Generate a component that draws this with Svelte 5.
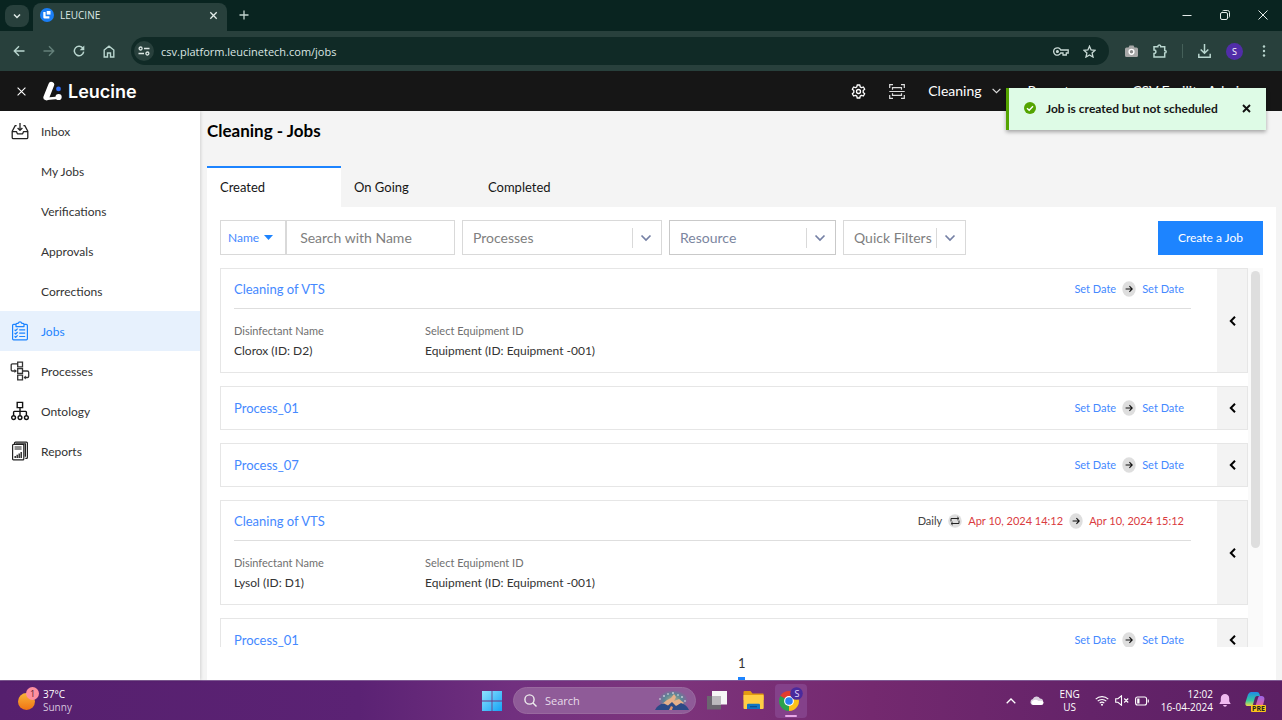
<script>
  let menuItems = [
    { label: 'Inbox', icon: 'inbox' },
    { label: 'My Jobs' },
    { label: 'Verifications' },
    { label: 'Approvals' },
    { label: 'Corrections' },
    { label: 'Jobs', icon: 'jobs', active: true },
    { label: 'Processes', icon: 'processes' },
    { label: 'Ontology', icon: 'ontology' },
    { label: 'Reports', icon: 'reports' }
  ];

  let jobs = [
    {
      name: 'Cleaning of VTS',
      fields: [
        ['Disinfectant Name', 'Clorox (ID: D2)'],
        ['Select Equipment ID', 'Equipment (ID: Equipment -001)']
      ]
    },
    { name: 'Process_01' },
    { name: 'Process_07' },
    {
      name: 'Cleaning of VTS',
      repeat: 'Daily',
      start: 'Apr 10, 2024 14:12',
      end: 'Apr 10, 2024 15:12',
      fields: [
        ['Disinfectant Name', 'Lysol (ID: D1)'],
        ['Select Equipment ID', 'Equipment (ID: Equipment -001)']
      ]
    },
    { name: 'Process_01' }
  ];

  let tabs = ['Created', 'On Going', 'Completed'];
  let activeTab = $state('Created');
  let toastOpen = $state(true);
</script>

{#snippet icon(name)}
  {#if name === 'inbox'}
    <svg width="18" height="18" viewBox="0 0 18 18" fill="none" stroke="#222" stroke-width="1.3" stroke-linejoin="round">
      <path d="M5.6 3.6H4.2L1.2 9.2v6.2q0 1.2 1.2 1.2h13.2q1.2 0 1.2-1.2V9.2l-3-5.6h-1.4M1.2 9.6h4.2l1 2.2h5.2l1-2.2h4.2M9 1v7M6.6 6L9 8.4 11.4 6" />
    </svg>
  {:else if name === 'jobs'}
    <svg width="18" height="20" viewBox="0 0 18 20" fill="none" stroke="#1d84ff" stroke-width="1.2" stroke-linejoin="round">
      <path d="M5 3.4H2.6q-1 0-1 1v13.4q0 1 1 1h12.8q1 0 1-1V4.400q0-1-1-1H13M5 5.600V3.400q0-1 1-1h1.200q.4-1.600 1.800-1.600t1.800 1.600H12q1 0 1 1v2.200zM8.200 8.900h6M8.200 12.200h6M8.200 15.500h6M3.600 8.700l1.100 1 1.900-2M3.600 12l1.100 1 1.900-2M3.600 15.300l1.100 1 1.900-2" />
    </svg>
  {:else if name === 'processes'}
    <svg width="20" height="20" viewBox="0 0 20 20" fill="none" stroke="#333" stroke-width="1.300">
      <path d="M7.700 1.200h4.800v4.600H7.700zM7.700 7.700h4.800v4.600H7.700zM7.700 14.200h4.800v4.600H7.700zM7.700 2.800H2.500q-1.300 0-1.300 1.300v4.600q0 1.300 1.300 1.300h3.700M12.500 10h4.800q1.400 0 1.400 1.300v3.900q0 1.300-1.300 1.300h-3" />
      <path d="M4.500 8l2.300 2-2.300 2zM15.800 14.500l-2.300 2 2.300 2z" fill="#333" stroke="none" />
    </svg>
  {:else if name === 'ontology'}
    <svg width="18" height="20" viewBox="0 0 18 20" fill="none" stroke="#111" stroke-width="1.400">
      <path d="M6.200 1.400h5.400v5.200H6.200zM9 6.600v8M2.600 14.600v-3.400q0-.8.8-.8h11.200q.8 0 .8.800v3.400" />
      <circle cx="2.600" cy="16.600" r="1.900" /><circle cx="9" cy="16.600" r="1.900" /><circle cx="15.400" cy="16.600" r="1.900" />
    </svg>
  {:else if name === 'reports'}
    <svg width="18" height="20" viewBox="0 0 18 20" fill="none" stroke="#222" stroke-width="1.200">
      <path d="M3.600 3.200V2q0-.9.900-.9h11q.9 0 .9.900v14.400q0 .9-.9.900h-1.200M5.400 3v-.2h9v13M1.600 4.200q0-.9.900-.9h9.400q.9 0 .9.900v13.700q0 .9-.9.900H2.500q-.9 0-.9-.9z" />
      <path d="M3.600 6h7M3.600 8h7" stroke-width="1" />
      <path d="M3.500 17v-2h1.400v2zM5.500 17v-3.200h1.400V17zM7.500 17v-4.400h1.400V17zM9.500 17v-6h1.400v6z" fill="#222" stroke="none" />
    </svg>
  {/if}
{/snippet}

{#snippet arrowDot()}
  <svg class="dot" width="14" height="16" viewBox="0 0 14 16" aria-hidden="true">
    <ellipse cx="7" cy="8" rx="6.700" ry="7.700" fill="#dedede" />
    <path d="M3.600 8h6.400M7.400 5.200L10.200 8l-2.800 2.800" fill="none" stroke="#111" stroke-width="1.100" />
  </svg>
{/snippet}

{#snippet filter(label, cls, options)}
  <div class="select {cls}">
    <select aria-label={label}>
      <option>{label}</option>
      {#each options as o}<option>{o}</option>{/each}
    </select>
    <svg width="30" height="20" viewBox="0 0 30 20" fill="none" aria-hidden="true">
      <path d="M1.500 0v20" stroke="#d9d9d9" />
      <path d="M10.500 7.500l4.500 4.500 4.500-4.500" stroke="#7580a5" stroke-width="1.700" />
    </svg>
  </div>
{/snippet}

<div class="screen">
  <div class="browser">
    <div class="strip">
      <button class="tabsearch" aria-label="Search tabs">
        <svg width="10" height="8" viewBox="0 0 10 8" fill="none" stroke="#dfe9e6" stroke-width="1.500"><path d="M2 2.500L5 5.500l3-3" /></svg>
      </button>
      <div class="tab">
        <svg width="14" height="14" viewBox="0 0 14 14" aria-hidden="true">
          <circle cx="7" cy="7" r="7" fill="#1a7ef5" />
          <path d="M3.300 4h2.300v4.200h3.800v2.300H4.600q-1.300 0-1.300-1.300z" fill="#fff" />
          <path d="M6.700 3h3.800v3.600H6.700z" fill="#fff" />
        </svg>
        <span>LEUCINE</span>
        <button aria-label="Close tab">
          <svg width="9" height="9" viewBox="0 0 9 9" stroke="#e4ecea" stroke-width="1.300"><path d="M1.300 1.300l6.400 6.400M7.700 1.300L1.300 7.700" /></svg>
        </button>
      </div>
      <button class="newtab" aria-label="New tab">
        <svg width="10" height="10" viewBox="0 0 10 10" stroke="#c2d3ce" stroke-width="1.300"><path d="M5 .5v9M.5 5h9" /></svg>
      </button>
      <div class="winbtns">
        <button aria-label="Minimize"><svg width="10" height="10" viewBox="0 0 10 10" stroke="#e3eae8"><path d="M.5 5.500h9" /></svg></button>
        <button aria-label="Restore"><svg width="10" height="10" viewBox="0 0 10 10" fill="none" stroke="#e3eae8"><rect x=".5" y="2.500" width="7" height="7" rx="1.500" /><path d="M2.500 1q.4-.5 1.200-.5h3.800q2 0 2 2v3.800q0 .8-.5 1.200" /></svg></button>
        <button aria-label="Close"><svg width="10" height="10" viewBox="0 0 10 10" stroke="#e3eae8"><path d="M.5 .5l9 9M9.500 .5l-9 9" /></svg></button>
      </div>
    </div>
    <div class="toolbar">
      <button aria-label="Back"><svg width="12" height="12" viewBox="0 0 12 12" fill="none" stroke="#b9d6cf" stroke-width="1.400"><path d="M11.500 6H1.500M6 1.300L1.300 6 6 10.700" /></svg></button>
      <button aria-label="Forward"><svg width="12" height="12" viewBox="0 0 12 12" fill="none" stroke="#64807a" stroke-width="1.400"><path d="M.5 6h10M6 1.300L10.700 6 6 10.700" /></svg></button>
      <button aria-label="Reload"><svg width="12" height="12" viewBox="0 0 12 12" fill="none" stroke="#b9d6cf" stroke-width="1.500"><path d="M10 3.400A4.700 4.700 0 1 0 10.700 6.600" /><path d="M11.300 .6v4.600H6.700z" fill="#b9d6cf" stroke="none" /></svg></button>
      <button aria-label="Home"><svg width="12" height="13" viewBox="0 0 12 13" fill="none" stroke="#b9d6cf" stroke-width="1.400"><path d="M1.200 5L6 1.200 10.800 5v7H7.500V8h-3v4H1.200z" /></svg></button>
      <div class="address">
        <span class="site">
          <svg width="12" height="10" viewBox="0 0 12 10" fill="none" stroke="#dbe6e3" stroke-width="1.300"><circle cx="2.600" cy="2.500" r="1.500" /><path d="M6 2.500h5.500M.5 7.500H6" /><circle cx="9.400" cy="7.500" r="1.500" /></svg>
        </span>
        <input aria-label="Address" value="csv.platform.leucinetech.com/jobs" />
        <svg width="16" height="9" viewBox="0 0 16 9" fill="none" stroke="#c8d9d5" stroke-width="1.300" aria-hidden="true"><path d="M7.700 3A3.700 3.700 0 1 0 7.700 6H10v2h3.300V6h1.900V3z" /><circle cx="4.400" cy="4.500" r=".9" fill="#c8d9d5" /></svg>
        <svg width="13" height="13" viewBox="0 0 13 13" fill="none" stroke="#c8d9d5" stroke-width="1.300" aria-hidden="true"><path d="M6.500 1.200l1.600 3.700 4 .4-3 2.700.9 4-3.500-2.100L3 12l.9-4-3-2.700 4-.4z" /></svg>
      </div>
      <div class="extensions">
        <svg width="13" height="12" viewBox="0 0 13 12" aria-hidden="true"><path d="M1.500 2.500h2L4.500 .5h4l1 2h2q1.500 0 1.500 1.500v6.500q0 1.500-1.500 1.500h-10Q0 12 0 10.500V4q0-1.500 1.500-1.500z" fill="#a9a9a9" /><circle cx="6.500" cy="6.800" r="2.400" fill="#8a8a8a" stroke="#fff" stroke-width="1.400" /></svg>
        <svg width="14" height="14" viewBox="0 0 14 14" fill="none" stroke="#b9d6cf" stroke-width="1.500" aria-hidden="true"><path d="M1 2.800h3.800q0-1.800 1.500-1.800t1.500 1.800h3.900v3.600q1.500 0 1.500 1.300t-1.500 1.300v4H1V9.500q1.900 0 1.900-1.700T1 6.100z" /></svg>
        <i></i>
        <svg width="13" height="14" viewBox="0 0 13 14" fill="none" stroke="#b9d6cf" stroke-width="1.500" aria-hidden="true"><path d="M6.500 0v9M2.700 5.500l3.800 3.800 3.800-3.800M.8 9.800v3.400h11.400V9.800" /></svg>
        <span class="avatar">S</span>
        <svg class="more" width="4" height="12" viewBox="0 0 4 12" fill="#b9d6cf" aria-hidden="true"><circle cx="2" cy="1.500" r="1.200" /><circle cx="2" cy="6" r="1.200" /><circle cx="2" cy="10.500" r="1.200" /></svg>
      </div>
    </div>
  </div>

  <header class="appbar">
    <button class="collapse" aria-label="Close menu">
      <svg width="9" height="9" viewBox="0 0 9 9" stroke="#fff" stroke-width="1.100"><path d="M.6 .6l7.800 7.800M8.400 .6L.6 8.400" /></svg>
    </button>
    <div class="brand">
      <svg width="19" height="20" viewBox="0 0 19 20" aria-hidden="true">
        <path d="M3.300 16.400L8.300 3.700" stroke="#fff" stroke-width="5.800" stroke-linecap="round" />
        <path d="M3.500 16.500q6-.5 12-1v2.400q-6 .4-11 1z" fill="#fff" />
        <circle cx="15.600" cy="16" r="3.100" fill="#fff" />
        <circle cx="15.500" cy="7.900" r="2.400" fill="#2f6df6" />
      </svg>
      <span>Leucine</span>
    </div>
    <nav class="appnav">
      <button aria-label="Settings">
        <svg width="15" height="15" viewBox="0 0 15 15" fill="none" stroke="#fff" stroke-width="1.300" stroke-linejoin="round"><path d="M6.200 1h2.600l.4 1.900 1.300.8 1.900-.7 1.300 2.300-1.500 1.300v1.800l1.500 1.300-1.300 2.300-1.900-.7-1.300.8-.4 1.900H6.200l-.4-1.900-1.300-.8-1.900.7L1.300 9.700l1.500-1.300V6.600L1.300 5.300 2.600 3l1.900.7 1.300-.8z" /><circle cx="7.500" cy="7.500" r="2" /></svg>
      </button>
      <button class="scan" aria-label="Scan">
        <svg width="16" height="15" viewBox="0 0 16 15" fill="none" stroke="#ddd" stroke-width="1.200"><path d="M.7 4V.7H4M12 .7h3.300V4M15.300 11v3.300H12M4 14.300H.7V11M3.500 5.800V3.600h9v2.200M3.500 9.200v2.200h9V9.200M.3 7.500h15.400" /></svg>
      </button>
      <button class="drop">Cleaning
        <svg width="9" height="6" viewBox="0 0 9 6" fill="none" stroke="#ddd" stroke-width="1.200"><path d="M.6 .8l3.900 3.900L8.400 .8" /></svg>
      </button>
      <button class="drop reports">Reports</button>
      <button class="drop">CSV Facility Admin
        <svg width="9" height="6" viewBox="0 0 9 6" fill="none" stroke="#ddd" stroke-width="1.200"><path d="M.6 .8l3.900 3.900L8.400 .8" /></svg>
      </button>
    </nav>
    {#if toastOpen}
      <div class="toast" role="status">
        <svg width="12" height="12" viewBox="0 0 12 12" aria-hidden="true"><circle cx="6" cy="6" r="6" fill="#54a400" /><path d="M3 6.200l2.200 2.100L9 4.200" fill="none" stroke="#fff" stroke-width="1.400" /></svg>
        <span>Job is created but not scheduled</span>
        <button aria-label="Dismiss" onclick={() => (toastOpen = false)}>
          <svg width="9" height="9" viewBox="0 0 9 9" stroke="#111" stroke-width="1.900"><path d="M1 1l7 7M8 1L1 8" /></svg>
        </button>
      </div>
    {/if}
  </header>

  <div class="workspace">
    <nav class="sidebar">
      {#each menuItems as item}
        <a href="#{item.label}" class:active={item.active}>
          <span class="ico">{#if item.icon}{@render icon(item.icon)}{/if}</span>{item.label}
        </a>
      {/each}
    </nav>

    <main>
      <h1>Cleaning - Jobs</h1>
      <div class="tabs" role="tablist">
        {#each tabs as t}
          <button role="tab" aria-selected={activeTab === t} class:on={activeTab === t} onclick={() => (activeTab = t)}>{t}</button>
        {/each}
      </div>
      <section class="panel">
        <div class="filters">
          <div class="search">
            <button>Name <svg width="9" height="5" viewBox="0 0 9 5" fill="#1d84ff"><path d="M0 0h9L4.500 5z" /></svg></button>
            <input type="text" placeholder="Search with Name" aria-label="Search with Name" />
          </div>
          {@render filter('Processes', 'wide', ['Process_01', 'Process_07'])}
          {@render filter('Resource', 'mid', ['Equipment'])}
          {@render filter('Quick Filters', 'slim', ['Scheduled'])}
          <button class="create">Create a Job</button>
        </div>

        <div class="listwrap">
          <div class="list">
            {#each jobs as job}
              <article class:detailed={job.fields}>
                <div class="content">
                  <div class="top">
                    <a href="#job">{job.name}</a>
                    <div class="dates" class:late={job.start}>
                      {#if job.repeat}
                        <span class="repeat">{job.repeat}</span>
                        <svg class="dot" width="14" height="14" viewBox="0 0 14 14" aria-hidden="true"><circle cx="7" cy="7" r="6.800" fill="#dedede" /><path d="M3 7.500V4.500h7.500M11 6.500v3H3.500M9.300 3l1.700 1.500L9.300 6M4.700 8L3 9.500 4.700 11" fill="none" stroke="#222" /></svg>
                      {/if}
                      <button>{job.start ?? 'Set Date'}</button>
                      {@render arrowDot()}
                      <button>{job.end ?? 'Set Date'}</button>
                    </div>
                  </div>
                  {#if job.fields}
                    <dl>
                      {#each job.fields as [k, v]}
                        <div><dt>{k}</dt><dd>{v}</dd></div>
                      {/each}
                    </dl>
                  {/if}
                </div>
                <button class="expand" aria-label="Expand job">
                  <svg width="7" height="10" viewBox="0 0 7 10" fill="none" stroke="#000" stroke-width="2"><path d="M6 .8L1.800 5 6 9.200" /></svg>
                </button>
              </article>
            {/each}
          </div>
          <div class="track"><div class="thumb"></div></div>
        </div>
        <div class="pager"><button>1</button></div>
      </section>
    </main>
  </div>

  <footer class="taskbar">
    <div class="weather">
      <span class="sun"><b>1</b></span>
      <p>37°C<br /><span>Sunny</span></p>
    </div>
    <div class="apps">
      <button aria-label="Start">
        <svg width="20" height="20" viewBox="0 0 20 20"><defs><linearGradient id="win" x1="0" y1="0" x2="1" y2="1"><stop offset="0" stop-color="#8fe3ff" /><stop offset="1" stop-color="#14a2f5" /></linearGradient></defs><path d="M0 0h9.600v9.600H0zM10.400 0H20v9.600h-9.600zM0 10.400h9.600V20H0zM10.400 10.400H20V20h-9.600z" fill="url(#win)" /></svg>
      </button>
      <label class="find">
        <svg width="13" height="13" viewBox="0 0 13 13" fill="none" stroke="#eee" stroke-width="1.400"><circle cx="5.500" cy="5.500" r="4.600" /><path d="M9 9l3.500 3.500" /></svg>
        <input type="text" placeholder="Search" aria-label="Search" />
        <svg width="34" height="20" viewBox="0 0 34 20">
          <defs><radialGradient id="sky"><stop offset="0" stop-color="#b9b38c" /><stop offset=".6" stop-color="#4f8f96" stop-opacity=".8" /><stop offset="1" stop-color="#4f8f96" stop-opacity="0" /></radialGradient></defs>
          <ellipse cx="18" cy="9" rx="15" ry="10" fill="url(#sky)" />
          <path d="M7 13l5-4 4-2 3-4 2 3-2 4 5-2 5 4-5 3H10z" fill="#e6b08a" />
          <path d="M0 19q3-6 9-6.500l4 2 4-3.500 4 4 5-3q6 2 8 7z" fill="#2d4a86" />
          <path d="M14 19l2-4 2 1-1 3z" fill="#e0926a" />
          <g fill="#fff"><circle cx="5" cy="8" r=".7" /><circle cx="9" cy="5" r=".8" /><circle cx="13" cy="3" r=".7" /><circle cx="18" cy="2" r=".8" /><circle cx="23" cy="4" r=".7" /><circle cx="27" cy="6" r=".8" /><circle cx="30" cy="10" r=".7" /></g>
        </svg>
      </label>
      <button aria-label="Task view"><svg width="20" height="19" viewBox="0 0 20 19"><path d="M0 5h14v13.500H0z" fill="#6b6670" /><path d="M5 0h15v13.500H5z" fill="#f6f6f6" /><path d="M5 5h9v8.500H5z" fill="#bcb9be" /></svg></button>
      <button aria-label="File Explorer"><svg width="21" height="19" viewBox="0 0 21 19"><path d="M.5 1q0-1 1-1h6l2 2.500H20q.7 0 .7.700V9H.5z" fill="#e29b12" /><path d="M.5 4h19.500q.7 0 .7.700V17q0 1-1 1H1.500q-1 0-1-1z" fill="#ffce45" /><path d="M4 18v-4q0-1.200 1.200-1.200h10.600q1.200 0 1.200 1.200v4z" fill="#0f74c4" /><path d="M7 15h7v1.300H7z" fill="#0a4f8f" /></svg></button>
      <button class="chromeapp" aria-label="Chrome">
        <svg width="26" height="26" viewBox="0 0 26 26">
          <path d="M11 15L2.340 10A10 10 0 0 1 19.660 10z" fill="#e33b2e" />
          <path d="M11 15L19.660 10A10 10 0 0 1 11 25z" fill="#fbc116" />
          <path d="M11 15V25A10 10 0 0 1 2.340 10z" fill="#2ba24c" />
          <circle cx="11" cy="15" r="4.900" fill="#fff" /><circle cx="11" cy="15" r="3.800" fill="#2d7df0" />
          <circle cx="18.500" cy="7.500" r="6.300" fill="#4a2a9c" />
        </svg>
        <span>S</span>
      </button>
    </div>
    <div class="tray">
      <svg width="10" height="6" viewBox="0 0 10 6" fill="none" stroke="#fff" stroke-width="1.300"><path d="M.7 5.300L5 1l4.300 4.300" /></svg>
      <svg class="cloud" width="14" height="9" viewBox="0 0 14 9"><path d="M3 9a3 3 0 0 1-.2-5.900A4 4 0 0 1 10 2.500 3.300 3.300 0 0 1 10.700 9z" fill="#d9cfde" /><path d="M3 9a2.500 2.500 0 0 1 0-4.500q3-1.500 5.500.5Q13 4 13.600 6.500 13.500 9 11 9z" fill="#fff" /></svg>
      <p class="lang">ENG<br />US</p>
      <svg class="wifi" width="14" height="11" viewBox="0 0 14 11" fill="none" stroke="#fff" stroke-width="1.100"><path d="M.7 4.200a9 9 0 0 1 12.600 0M2.700 6.200a6.200 6.200 0 0 1 8.600 0M4.700 8.200a3.400 3.400 0 0 1 4.600 0" /><circle cx="7" cy="9.700" r="1" fill="#fff" stroke="none" /></svg>
      <svg width="14" height="11" viewBox="0 0 14 11" fill="none" stroke="#fff" stroke-width="1.100"><path d="M.7 3.700h2.200L6.500 .8v9.400L2.900 7.300H.7zM9.200 3.500l4 4M13.200 3.500l-4 4" /></svg>
      <svg width="14" height="10" viewBox="0 0 14 10" fill="none" stroke="#fff" stroke-width="1.100"><rect x=".6" y="1" width="11" height="8" rx="2" /><path d="M13.300 3.500v3" /><path d="M2.200 2.500h2.300v5H2.200z" fill="#fff" stroke="none" /></svg>
      <p class="clock">12:02<br />16-04-2024</p>
      <svg width="12" height="13" viewBox="0 0 12 13" fill="#efb9ef"><path d="M6 0a4.200 4.200 0 0 1 4.200 4.200v3L11.700 10H.3l1.500-2.800v-3A4.200 4.200 0 0 1 6 0zM4 11h4q-.5 1.800-2 1.800T4 11z" /></svg>
      <div class="copilot">
        <svg width="20" height="20" viewBox="0 0 20 20">
          <defs><linearGradient id="cp1" x1="0" y1="0" x2="0" y2="1"><stop offset="0" stop-color="#1f8be8" /><stop offset=".6" stop-color="#35c9a0" /><stop offset="1" stop-color="#f0d94a" /></linearGradient><linearGradient id="cp2" x1="0" y1="0" x2="0" y2="1"><stop offset="0" stop-color="#9a63e8" /><stop offset="1" stop-color="#f0658e" /></linearGradient></defs>
          <path d="M6 1h6q2 0 2.500 2l.5 2h-3q-1.500 0-2 1.500L7.500 15H3Q-.5 15 .6 11L3 3.500Q4 1 6 1z" fill="url(#cp1)" />
          <path d="M14.500 5H17q3 .5 2.300 4L18 14q-1 3-4 3H8.500q1.500-.5 2-2l2.500-8q.5-2 1.500-2z" fill="url(#cp2)" />
        </svg>
        <span>PRE</span>
      </div>
    </div>
  </footer>
</div>

<style>
  :global(body) { margin: 0; background: #f4f4f4; }
  .screen { display: flex; flex-direction: column; height: 100vh; overflow: hidden; font-family: Lato, "Open Sans", sans-serif; font-size: 13px; color: #333; }
  .screen :is(button, input, select) { font: inherit; color: inherit; background: none; border: 0; padding: 0; margin: 0; outline: 0; min-width: 0; }
  button { cursor: pointer; }
  a { text-decoration: none; color: inherit; }
  svg { display: block; flex: none; }
  p { margin: 0; }

  .browser, .taskbar { font-family: "Open Sans", "Noto Sans", sans-serif; }
  .strip { display: flex; height: 31px; background: #092420; padding-left: 5px; }
  .strip .tabsearch { display: grid; place-items: center; align-self: center; width: 24px; height: 22px; border-radius: 8px; background: #28403c; }
  .tab { display: flex; align-items: center; gap: 6px; width: 178px; margin: 3px 0 0 4px; padding: 0 9px 4px 7px; border-radius: 8px 8px 0 0; background: #28403c; color: #dde8e5; font-size: 10px; }
  .tab span { flex: 1; }
  .strip .newtab { padding: 0 0 2px 12px; }
  .winbtns { display: flex; gap: 28px; margin-left: auto; padding: 0 14px 2px 0; }
  .toolbar { display: flex; align-items: center; height: 40px; padding: 0 16px 0 13px; background: #28403c; }
  .toolbar > button { margin-right: 18px; }
  .address { flex: 1; display: flex; align-items: center; gap: 14px; height: 28px; margin-left: -2px; padding: 0 13px 0 3px; border-radius: 14px; background: #102a26; }
  .site { display: grid; place-items: center; width: 20px; height: 20px; border-radius: 50%; background: #28403c; }
  .address input { flex: 1; font-size: 11px; color: #dbe6e3; margin-left: -7px; }
  .extensions { display: flex; align-items: center; gap: 15px; margin-left: 16px; }
  .extensions .more { margin-left: 4px; }
  .extensions i { width: 1px; height: 14px; background: #456059; }
  .avatar { display: grid; place-items: center; width: 17px; height: 17px; border-radius: 50%; background: #512da8; color: #fff; font-size: 9px; }

  .appbar { position: relative; display: flex; align-items: center; height: 40px; flex: none; padding: 0 16px 0 17px; background: #161616; color: #fff; z-index: 2; }
  .brand { display: flex; align-items: center; gap: 6px; margin-left: 17px; font: 600 18px Inter, sans-serif; }
  .appnav { display: flex; align-items: center; gap: 27px; margin-left: auto; font-size: 14px; }
  .appnav .scan { margin: 0 -4px; }
  .appnav .drop { display: flex; align-items: center; gap: 10px; padding-bottom: 1px; }
  .appnav .reports { padding-right: 30px; }
  .toast { position: absolute; top: 17px; right: 16px; box-sizing: border-box; width: 260px; height: 42px; display: flex; align-items: center; padding: 0 15px 2px; border-left: 3px solid #54a400; background: #defbe6; color: #161616; font-weight: 700; font-size: 12px; box-shadow: 0 2px 4px #0005; }
  .toast span { flex: 1; margin-left: 10px; }

  .workspace { flex: 1; min-height: 0; display: flex; }
  .sidebar { width: 200px; flex: none; background: #fff; box-shadow: 1px 0 3px #0002; z-index: 1; font-size: 12px; }
  .sidebar a { display: flex; align-items: center; height: 40px; padding-left: 10px; }
  .sidebar .active { background: #e7f1fd; color: #1d84ff; }
  .ico { display: grid; place-items: center; width: 20px; margin-right: 11px; }

  main { flex: 1; min-width: 0; display: flex; flex-direction: column; padding: 0 6px 0 7px; background: #f4f4f4; }
  h1 { margin: 10px 0 25px; font-size: 17px; line-height: 20px; font-weight: 700; color: #000; }
  .tabs { display: flex; }
  .tabs button { width: 134px; height: 41px; padding: 0 13px 2px; text-align: left; color: #161616; border-top: 2px solid transparent; }
  .tabs .on { background: #fff; border-top-color: #1d84ff; }
  .panel { flex: 1; min-height: 0; display: flex; flex-direction: column; padding: 13px 13px 0; background: #fff; }
  .filters { display: flex; gap: 7px; height: 35px; flex: none; margin-bottom: 13px; font-size: 14px; color: #808080; }
  .search { display: flex; width: 235px; box-sizing: border-box; border: 1px solid #d9d9d9; }
  .search button { display: flex; align-items: center; gap: 5px; padding: 0 12px 1px 7px; border-right: 2px solid #d9d9d9; color: #4589ff; font-size: 12px; }
  .search input { flex: 1; padding: 0 0 1px 13px; }
  .search input::placeholder { color: #808080; opacity: 1; }
  .select { display: grid; align-items: center; border: 1px solid #d9d9d9; box-sizing: border-box; }
  .select select { grid-area: 1/1; width: 100%; height: 100%; padding: 0 0 1px 10px; appearance: none; }
  .select svg { grid-area: 1/1; justify-self: end; pointer-events: none; }
  .wide { width: 200px; }
  .mid { width: 167px; color: #7b86a0; border-color: #c9c9c9; }
  .slim { width: 123px; }
  .filters .create { margin: 1px 0 0 auto; padding: 0 20px 1px; height: 34px; background: #1d84ff; color: #fff; font-size: 12px; }

  .listwrap { flex: 1; min-height: 0; display: flex; }
  .list { flex: 1; min-width: 0; overflow: hidden; display: flex; flex-direction: column; gap: 13px; }
  .track { width: 15px; background: #fafafa; }
  .thumb { width: 9px; height: 73%; margin: 3px; border-radius: 5px; background: #dedede; }
  article { display: flex; flex: none; height: 44px; box-sizing: border-box; border: 1px solid #e6e6e6; }
  .detailed { height: 105px; }
  .content { flex: 1; min-width: 0; padding: 0 26px 0 13px; }
  .top { display: flex; align-items: center; justify-content: space-between; height: 41px; color: #4589ff; }
  .detailed .top { height: 39px; border-bottom: 1px solid #dedede; }
  .dates { display: flex; align-items: center; gap: 6px; padding-right: 7px; font-size: 11px; }
  .late { color: #da3b40; }
  .repeat { color: #444; }
  dl { display: flex; margin: 14px 0 0; }
  dl div { width: 191px; white-space: nowrap; }
  dt { font-size: 11px; line-height: 16px; color: #6f6f6f; }
  dd { margin: 2px 0 0; line-height: 20px; font-size: 12px; }
  article .expand { display: grid; place-items: center; width: 30px; background: #f3f3f3; }
  .pager { display: flex; justify-content: center; height: 33px; flex: none; }
  .pager button { width: 7px; padding-top: 1px; border-bottom: 3px solid #1d84ff; }

  .taskbar { height: 40px; flex: none; display: grid; grid-template-columns: 1fr auto 1fr; align-items: center; box-sizing: border-box; padding: 0 17px 0 18px; border-top: 1px solid #7f5a93; color: #fff; font-size: 10px; line-height: 13px; background: linear-gradient(90deg, #56206e 0, #5b2274 28%, #71307f 40%, #7d347c 52%, #74296f 68%, #642369 85%, #5c2064 100%); }
  .weather { display: flex; gap: 8px; }
  .weather p span { color: #d5c4dd; }
  .sun { position: relative; width: 17px; height: 17px; margin-top: 5px; border-radius: 50%; background: linear-gradient(#f9b43a, #f07413); }
  .sun b { position: absolute; left: 8px; top: -6px; width: 13px; height: 13px; border-radius: 50%; background: #ff8f9f; color: #521d31; text-align: center; font-weight: 400; font-size: 9px; }
  .apps { display: flex; align-items: center; gap: 11px; margin-left: 6px; }
  .find { display: flex; align-items: center; width: 183px; height: 27px; box-sizing: border-box; padding: 0 6px 0 10px; border-radius: 14px; background: #8f5b98; border: 1px solid #99699f; }
  .find input { flex: 1; padding-left: 8px; font-size: 11px; }
  .find input::placeholder { color: #e8dcea; opacity: 1; }
  .apps button:nth-of-type(3) { margin-left: 5px; }
  .apps .chromeapp { position: relative; width: 32px; height: 34px; display: grid; place-items: center; border-radius: 4px; background: #84418a; }
  .chromeapp::after { content: ""; position: absolute; left: 10px; right: 10px; bottom: 1px; height: 2px; border-radius: 2px; background: #e8a8e8; }
  .chromeapp svg { margin-bottom: 4px; }
  .chromeapp span { position: absolute; left: 19px; top: 3px; width: 6px; color: #e6dcff; font-size: 9px; }
  .tray { display: flex; align-items: center; justify-content: flex-end; gap: 6px; }
  .cloud { margin-left: 8px; }
  .lang { text-align: center; margin: 0 9px; }
  .clock { text-align: right; margin-left: 6px; }
  .copilot { position: relative; margin-left: 8px; }
  .copilot span { position: absolute; right: -1px; bottom: -1px; padding: 0 1px; background: #fcc419; color: #222; font-size: 7px; line-height: 7px; font-weight: 700; border-radius: 1px; }
</style>
